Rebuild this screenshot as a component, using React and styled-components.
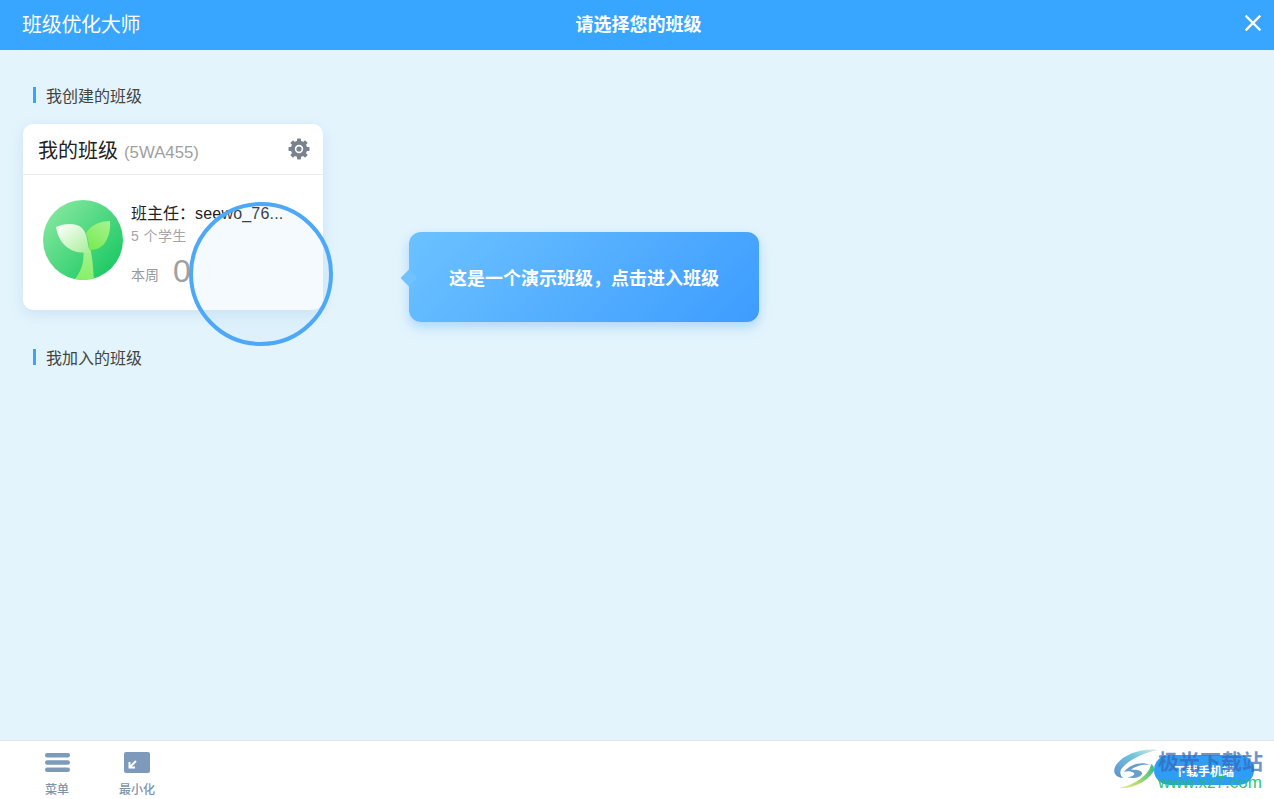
import React from 'react';
import styled, {createGlobalStyle} from 'styled-components';

const Global = createGlobalStyle`
  html, body {
    margin: 0;
    padding: 0;
    height: 100%;
    overflow: hidden;
  }
  body {
    font-family: "Liberation Sans", "Noto Sans CJK SC", sans-serif;
  }
`;

const Page = styled.div`
  position: relative;
  width: 1274px;
  height: 799px;
  display: flex;
  flex-direction: column;
  overflow: hidden;
  background: #e3f4fc;
`;

const Header = styled.header`
  flex: 0 0 50px;
  display: grid;
  grid-template-columns: 1fr auto 1fr;
  align-items: center;
  padding: 0 12px 4px 15px;
  box-sizing: border-box;
  background: #38a6ff;
  color: #fff;
`;
const AppName = styled.div`
  margin-left: 7px;
  font-size: 20px;
  letter-spacing: -0.3px;
`;
const PageTitle = styled.div`
  font-size: 18px;
  font-weight: 700;
`;
const CloseButton = styled.div`
  justify-self: end;
  display: flex;
  width: 18px;
  height: 18px;
`;

const Main = styled.main`
  flex: 1;
  padding: 37px 0 0 23px;
  box-sizing: border-box;
`;
const SectionTitle = styled.h2`
  margin: 0 0 ${p => p.$gap}px 10px;
  padding-left: 10px;
  height: 16px;
  display: flex;
  align-items: center;
  border-left: 3px solid #38a6ff;
  font-size: 16px;
  font-weight: 400;
  color: #444;
`;

const Card = styled.div`
  width: 300px;
  height: 186px;
  margin-bottom: 39px;
  background: #fff;
  border-radius: 10px;
  box-shadow: 0 4px 14px rgba(120, 170, 215, 0.22);
`;
const CardHead = styled.div`
  height: 51px;
  box-sizing: border-box;
  display: flex;
  align-items: center;
  justify-content: space-between;
  padding: 0 13px 1px 15px;
  border-bottom: 1px solid #ececec;
`;
const CardTitle = styled.div`
  display: flex;
  align-items: baseline;
  gap: 6px;
  padding-top: 2px;
  font-size: 20px;
  color: #222;
`;
const ClassCode = styled.span`
  font-size: 16.8px;
  color: #a0a0a0;
`;
const CardBody = styled.div`
  display: flex;
  gap: 8px;
  padding: 25px 0 0 20px;
`;
const Avatar = styled.div`
  flex: 0 0 80px;
  height: 80px;
`;
const Info = styled.div`
  display: flex;
  flex-direction: column;
  padding-top: 3px;
`;
const Teacher = styled.div`
  font-size: 16px;
  line-height: 22px;
  color: #222;
  white-space: nowrap;
`;
const TeacherName = styled.span`
  letter-spacing: 0.2px;
`;
const Students = styled.div`
  font-size: 14px;
  line-height: 22px;
  letter-spacing: 0.4px;
  color: #a5a5a5;
`;
const WeekRow = styled.div`
  display: flex;
  align-items: flex-end;
  gap: 14px;
  margin-top: 6px;
`;
const WeekLabel = styled.span`
  margin-bottom: 4px;
  font-size: 14px;
  line-height: 20px;
  color: #999;
`;
const WeekValue = styled.span`
  font-size: 32px;
  line-height: 36px;
  color: #a0a0a0;
`;

const Spotlight = styled.div`
  position: absolute;
  left: 189px;
  top: 202px;
  width: 144px;
  height: 144px;
  box-sizing: border-box;
  border: 4px solid #4da8fa;
  border-radius: 50%;
  background: rgba(190, 225, 255, 0.16);
`;

const Tip = styled.div`
  position: absolute;
  left: 409px;
  top: 232px;
  width: 350px;
  height: 90px;
  display: flex;
  align-items: center;
  justify-content: center;
  border-radius: 12px;
  background: linear-gradient(135deg, #6cc2ff 0%, #3d9cff 100%);
  box-shadow: 0 5px 12px rgba(70, 160, 255, 0.35);
  color: #fff;
  font-size: 18px;
  font-weight: 700;
  &::before {
    content: '';
    position: absolute;
    left: -6px;
    top: 40px;
    width: 12px;
    height: 12px;
    background: #70c2ff;
    transform: rotate(45deg);
  }
`;

const Footer = styled.footer`
  flex: 0 0 59px;
  box-sizing: border-box;
  display: flex;
  align-items: flex-start;
  padding: 7px 20px 0 39px;
  gap: 44px;
  background: #fff;
  border-top: 1px solid #e4e4e4;
`;
const ToolItem = styled.div`
  display: flex;
  flex-direction: column;
  align-items: center;
  width: 36px;
  font-size: 12px;
  font-weight: 500;
  line-height: 16px;
  white-space: nowrap;
  color: #7d94ad;
`;
const ToolIcon = styled.div`
  height: 28px;
  margin-bottom: 6px;
  display: flex;
  align-items: center;
`;
const DownloadButton = styled.div`
  margin: 7px 0 0 auto;
  width: 100px;
  height: 30px;
  display: flex;
  align-items: center;
  justify-content: center;
  border-radius: 15px;
  background: #2f9df5;
  color: #fff;
  font-size: 12px;
  font-weight: 700;
`;

const Watermark = styled.div`
  position: absolute;
  left: 1110px;
  top: 745px;
  display: flex;
  pointer-events: none;
`;
const MarkText = styled.div`
  display: flex;
  flex-direction: column;
  margin-left: -2px;
  padding-top: 6px;
  line-height: 1;
`;
const MarkName = styled.div`
  font-size: 21px;
  font-weight: 700;
  color: rgba(55, 105, 185, 0.72);
  white-space: nowrap;
`;
const MarkUrl = styled.div`
  margin-top: 2px;
  font-size: 17px;
  color: rgba(35, 190, 105, 0.95);
  white-space: nowrap;
`;

const Sprout = () => (
  <svg width="80" height="80" viewBox="0 0 80 80">
    <defs>
      <linearGradient id="disc" x1="0.1" y1="0.1" x2="0.9" y2="0.85">
        <stop offset="0" stopColor="#84e79e"/>
        <stop offset="1" stopColor="#1dc964"/>
      </linearGradient>
      <linearGradient id="left" x1="0.1" y1="0.1" x2="0.9" y2="0.9">
        <stop offset="0" stopColor="#f9fef7"/>
        <stop offset="1" stopColor="#aef0a2"/>
      </linearGradient>
      <linearGradient id="right" x1="0.8" y1="0" x2="0.2" y2="1">
        <stop offset="0" stopColor="#a4f28c"/>
        <stop offset="1" stopColor="#78ea50"/>
      </linearGradient>
      <linearGradient id="stem" x1="0.5" y1="0" x2="0.5" y2="1">
        <stop offset="0" stopColor="#a8f190"/>
        <stop offset="1" stopColor="#86f068"/>
      </linearGradient>
      <clipPath id="round"><circle cx="40" cy="40" r="40"/></clipPath>
    </defs>
    <circle cx="40" cy="40" r="40" fill="url(#disc)"/>
    <g clipPath="url(#round)">
      <path d="M31 80C38 72 42 62 40 48L47 48C50 58 50 70 51 80Z" fill="url(#stem)"/>
      <path d="M43 33C48 25 57 21 67 21C68 34 63 51 46 50C46 44 45 38 43 33Z" fill="url(#right)"/>
      <path d="M13 27C22 23 34 23 39 28C45 34 44 44 47 52C30 55 16 46 13 27Z" fill="url(#left)"/>
    </g>
  </svg>
);

const Gear = () => {
  const teeth = [0, 45, 90, 135, 180, 225, 270, 315];
  return (
    <svg width="22" height="22" viewBox="0 0 22 22">
      {teeth.map(a => (
        <rect key={a} x="9" y="0.5" width="4" height="4.5" rx="0.8" fill="#78838f" transform={`rotate(${a} 11 11)`}/>
      ))}
      <circle cx="11" cy="11" r="6.2" fill="none" stroke="#78838f" strokeWidth="4"/>
      <circle cx="11" cy="11" r="2.6" fill="#78838f"/>
    </svg>
  );
};

const CloseIcon = () => (
  <svg width="18" height="18" viewBox="0 0 18 18">
    <path d="M2.5 2.5L15.5 15.5M15.5 2.5L2.5 15.5" stroke="#fff" strokeWidth="2.4" strokeLinecap="square" fill="none"/>
  </svg>
);

const MenuIcon = () => (
  <svg width="25" height="19" viewBox="0 0 25 19">
    <rect x="0" y="0" width="25" height="4.4" rx="2.2" fill="#7e9aba"/>
    <rect x="0" y="7.3" width="25" height="4.4" rx="2.2" fill="#7e9aba"/>
    <rect x="0" y="14.6" width="25" height="4.4" rx="2.2" fill="#7e9aba"/>
  </svg>
);

const MinimizeIcon = () => (
  <svg width="26" height="21" viewBox="0 0 26 21">
    <rect x="0" y="0" width="26" height="21" rx="2" fill="#7e9aba"/>
    <path d="M12 9L6 15M5.5 10V15.5H11" stroke="#fff" strokeWidth="2" fill="none"/>
  </svg>
);

const MarkLogo = () => (
  <svg width="50" height="46" viewBox="0 0 50 46">
    <defs>
      <linearGradient id="swirlTop" x1="0" y1="1" x2="1" y2="0">
        <stop offset="0" stopColor="#5f8fd0"/>
        <stop offset="0.6" stopColor="#6fc4dc"/>
        <stop offset="1" stopColor="#d8eee4"/>
      </linearGradient>
      <linearGradient id="swirlLow" x1="0" y1="0.6" x2="1" y2="0.4">
        <stop offset="0" stopColor="#e8ec80"/>
        <stop offset="0.5" stopColor="#a8dc68"/>
        <stop offset="1" stopColor="#40c08a"/>
      </linearGradient>
    </defs>
    <path d="M48 5C32 3 14 9 6 20C2 27 5 32 13 33C10 30 9 26 13 22C20 14 34 8 48 5Z" fill="url(#swirlTop)"/>
    <path d="M14 27C20 19 32 16 40 20C33 19 25 21 21 25C27 24 33 26 32 29C30 33 22 34 17 32C22 32 25 30 24 28C21 26 17 26 14 27Z" fill="#6aa0c8"/>
    <path d="M9 43C18 44 35 40 44 26C45 23 43 20 41 19C40 29 25 40 9 43Z" fill="url(#swirlLow)"/>
  </svg>
);

const App = () => (
  <Page>
    <Global/>
    <Header>
      <AppName>班级优化大师</AppName>
      <PageTitle>请选择您的班级</PageTitle>
      <CloseButton><CloseIcon/></CloseButton>
    </Header>
    <Main>
      <SectionTitle $gap={21}>我创建的班级</SectionTitle>
      <Card>
        <CardHead>
          <CardTitle>我的班级<ClassCode>(5WA455)</ClassCode></CardTitle>
          <Gear/>
        </CardHead>
        <CardBody>
          <Avatar><Sprout/></Avatar>
          <Info>
            <Teacher>班主任：<TeacherName>seewo_76...</TeacherName></Teacher>
            <Students>5 个学生</Students>
            <WeekRow><WeekLabel>本周</WeekLabel><WeekValue>0</WeekValue></WeekRow>
          </Info>
        </CardBody>
      </Card>
      <SectionTitle $gap={0}>我加入的班级</SectionTitle>
    </Main>
    <Footer>
      <ToolItem>
        <ToolIcon><MenuIcon/></ToolIcon>
        菜单
      </ToolItem>
      <ToolItem>
        <ToolIcon><MinimizeIcon/></ToolIcon>
        最小化
      </ToolItem>
      <DownloadButton>下载手机端</DownloadButton>
    </Footer>
    <Spotlight/>
    <Tip>这是一个演示班级，点击进入班级</Tip>
    <Watermark>
      <MarkLogo/>
      <MarkText>
        <MarkName>极光下载站</MarkName>
        <MarkUrl>www.xz7.com</MarkUrl>
      </MarkText>
    </Watermark>
  </Page>
);

export default App;
